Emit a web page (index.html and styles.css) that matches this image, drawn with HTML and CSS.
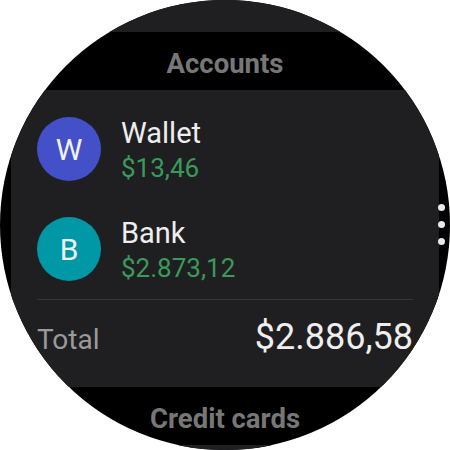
FILE: index.html
```html
<!DOCTYPE html>
<html>
<head>
<meta charset="utf-8">
<link rel="stylesheet" href="styles.css">
</head>
<body>
<div class="watch">
  <div class="card card-top"></div>
  <div class="section-header">Accounts</div>
  <div class="card card-main">
    <div class="account">
      <div class="avatar avatar-wallet">W</div>
      <div class="account-info">
        <div class="account-name">Wallet</div>
        <div class="account-amount">$13,46</div>
      </div>
    </div>
    <div class="account">
      <div class="avatar avatar-bank">B</div>
      <div class="account-info">
        <div class="account-name">Bank</div>
        <div class="account-amount">$2.873,12</div>
      </div>
    </div>
    <div class="divider"></div>
    <div class="total-row">
      <span class="total-label">Total</span>
      <span class="total-value">$2.886,58</span>
    </div>
  </div>
  <div class="section-header">Credit cards</div>
  <div class="card card-bottom"></div>
  <div class="page-dots">
    <span class="dot"></span>
    <span class="dot"></span>
    <span class="dot"></span>
  </div>
</div>
</body>
</html>
```
FILE: styles.css
```css
html, body {
  margin: 0;
  padding: 0;
  background: #ffffff;
}
body {
  width: 450px;
  height: 450px;
  overflow: hidden;
  font-family: Roboto, "Noto Sans", sans-serif;
}
.watch {
  position: relative;
  width: 450px;
  height: 450px;
  border-radius: 50%;
  background: #000000;
  overflow: hidden;
  display: flex;
  flex-direction: column;
}
.card {
  background: #1f1f21;
  margin: 0 11px;
  flex-shrink: 0;
}
.card-top {
  height: 32px;
}
.card-bottom {
  height: 40px;
}
.section-header {
  height: 58px;
  box-sizing: border-box;
  padding-top: 4px;
  flex-shrink: 0;
  display: flex;
  align-items: center;
  justify-content: center;
  color: #777777;
  font-weight: 700;
  font-size: 27.5px;
}
.card-main {
  height: 297px;
  box-sizing: border-box;
  padding: 27px 26px 0 26px;
  display: flex;
  flex-direction: column;
}
.account {
  display: flex;
  align-items: flex-start;
  gap: 20px;
  height: 64px;
  margin-bottom: 36px;
}
.account:nth-child(2) {
  margin-bottom: 18px;
}
.avatar {
  width: 64px;
  height: 64px;
  border-radius: 50%;
  display: flex;
  align-items: center;
  justify-content: center;
  color: #f0f0f0;
  font-size: 30px;
  flex-shrink: 0;
}
.avatar-wallet {
  background: #4450c8;
}
.avatar-bank {
  background: #0097a7;
}
.account-info {
  display: flex;
  flex-direction: column;
}
.account-name {
  color: #eeeeee;
  font-size: 29px;
  line-height: 32px;
}
.account-amount {
  color: #3a9a5a;
  font-size: 26px;
  line-height: 32px;
  margin-top: 3px;
}
.divider {
  height: 1px;
  background: #38383a;
}
.total-row {
  display: flex;
  justify-content: space-between;
  align-items: baseline;
  margin-top: 16px;
}
.total-label {
  color: #9a9a9a;
  font-size: 28px;
}
.total-value {
  color: #eeeeee;
  font-size: 36px;
}
.page-dots {
  position: absolute;
  left: 438px;
  top: 204px;
  display: flex;
  flex-direction: column;
  gap: 10px;
}
.dot {
  width: 7px;
  height: 7px;
  border-radius: 50%;
  background: #e8e8e8;
}
```
